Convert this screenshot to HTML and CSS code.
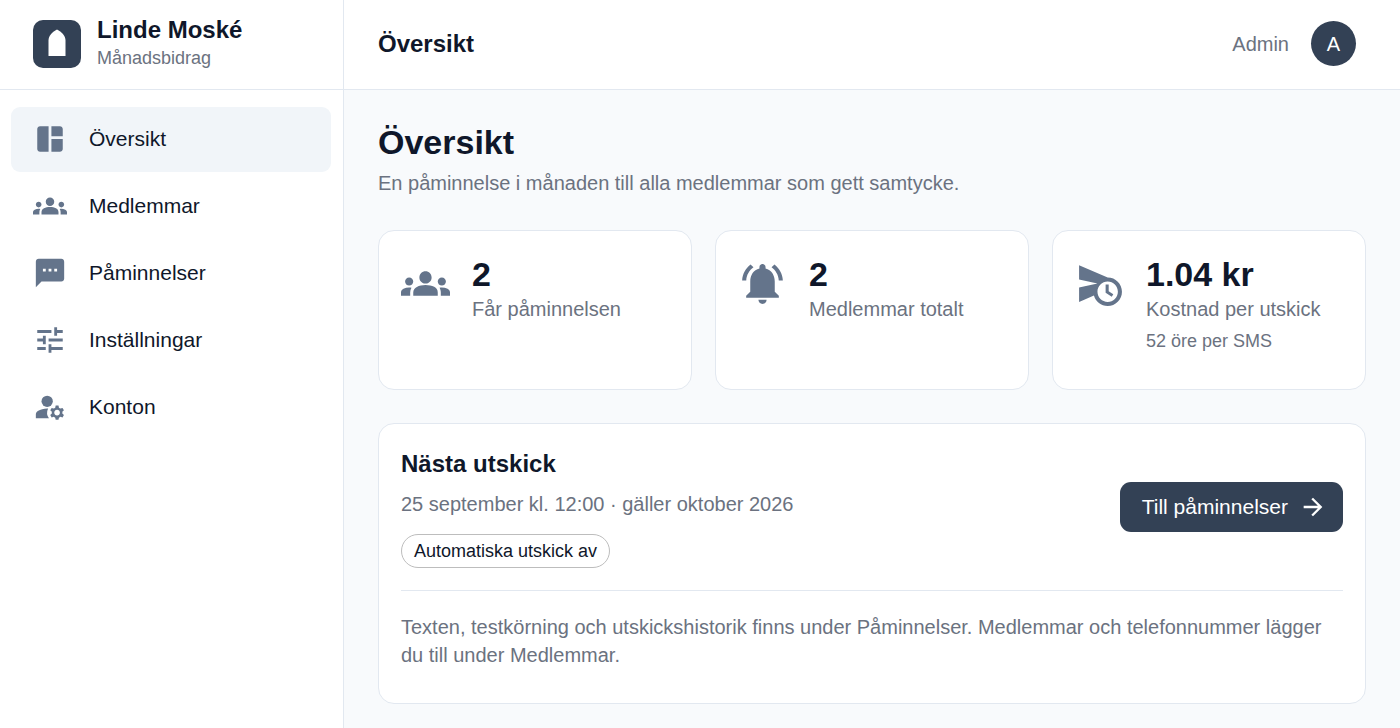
FILE: index.html
```html
<!DOCTYPE html>
<html lang="sv">
<head>
  <meta charset="UTF-8">
  <meta name="viewport" content="width=device-width, initial-scale=1">
  <title>Översikt – Linde Moské</title>
  <link rel="stylesheet" href="styles.css">
</head>
<body>
  <aside class="sidebar">
    <div class="brand">
      <svg class="brand-logo" viewBox="0 0 48 48" aria-hidden="true">
        <rect width="48" height="48" rx="10" fill="#334155"/>
        <path d="M15.500 36V20.500C15.500 15.500 19.500 12 24 9.500C28.500 12 32.500 15.500 32.500 20.500V36Z" fill="#fff"/>
      </svg>
      <div>
        <div class="brand-name">Linde Moské</div>
        <div class="brand-sub">Månadsbidrag</div>
      </div>
    </div>

    <nav class="nav">
      <a class="nav-item active" href="#oversikt">
        <svg class="icon" viewBox="0 0 24 24"><path d="M11 21H5c-1.100 0-2-.9-2-2V5c0-1.100.9-2 2-2h6zm2 0h6c1.100 0 2-.9 2-2v-7h-8zm8-11V5c0-1.100-.9-2-2-2h-6v7z"/></svg>
        Översikt
      </a>
      <a class="nav-item" href="#medlemmar">
        <svg class="icon" viewBox="0 0 24 24"><use href="#groups"/></svg>
        Medlemmar
      </a>
      <a class="nav-item" href="#paminnelser">
        <svg class="icon" viewBox="0 0 24 24"><path d="M20 2H4c-1.100 0-1.990.9-1.990 2L2 22l4-4h14c1.100 0 2-.9 2-2V4c0-1.100-.9-2-2-2M9 11H7V9h2zm4 0h-2V9h2zm4 0h-2V9h2z"/></svg>
        Påminnelser
      </a>
      <a class="nav-item" href="#installningar">
        <svg class="icon" viewBox="0 0 24 24"><path d="M3 17v2h6v-2zM3 5v2h10V5zm10 16v-2h8v-2h-8v-2h-2v6zM7 9v2H3v2h4v2h2V9zm14 4v-2H11v2zm-6-4h2V7h4V5h-4V3h-2z"/></svg>
        Inställningar
      </a>
      <a class="nav-item" href="#konton">
        <svg class="icon" viewBox="0 0 24 24"><circle cx="10" cy="8" r="4"/><path d="M10.670 13.020c-.22-.01-.44-.02-.67-.02-2.420 0-4.680.67-6.610 1.820-.88.52-1.390 1.500-1.390 2.530V20h9.260a6.960 6.960 0 0 1-.59-6.980M20.750 16c0-.22-.03-.42-.06-.63l1.140-1.010-1-1.730-1.450.49c-.32-.27-.68-.48-1.080-.63L18 11h-2l-.3 1.490c-.4.15-.76.36-1.080.63l-1.450-.49-1 1.730 1.140 1.010c-.03.21-.06.41-.06.63s.03.42.06.63l-1.140 1.010 1 1.730 1.450-.49c.32.27.68.48 1.080.63L16 21h2l.3-1.490c.4-.15.76-.36 1.080-.63l1.450.49 1-1.730-1.140-1.010c.03-.21.06-.41.06-.63M17 18c-1.100 0-2-.9-2-2s.9-2 2-2 2 .9 2 2-.9 2-2 2"/></svg>
        Konton
      </a>
    </nav>
  </aside>

  <div class="page">
    <header class="topbar">
      <div class="topbar-title">Översikt</div>
      <div class="user">
        <span>Admin</span>
        <span class="avatar">A</span>
      </div>
    </header>

    <main class="content">
      <h1>Översikt</h1>
      <p class="lead">En påminnelse i månaden till alla medlemmar som gett samtycke.</p>

      <section class="stats">
        <div class="card stat">
          <svg class="icon" viewBox="0 0 24 24">
            <path id="groups" d="M12 12.750c1.630 0 3.070.39 4.240.9 1.080.48 1.760 1.560 1.760 2.730V18H6v-1.610c0-1.180.68-2.260 1.760-2.730 1.170-.52 2.610-.91 4.240-.91M4 13c1.100 0 2-.9 2-2s-.9-2-2-2-2 .9-2 2 .9 2 2 2m1.130 1.100c-.37-.06-.74-.1-1.130-.1-.99 0-1.930.21-2.780.58C.48 14.900 0 15.620 0 16.430V18h4.500v-1.610c0-.83.23-1.610.63-2.290M20 13c1.100 0 2-.9 2-2s-.9-2-2-2-2 .9-2 2 .9 2 2 2m4 3.430c0-.81-.48-1.530-1.220-1.850-.85-.37-1.790-.58-2.780-.58-.39 0-.76.04-1.130.1.4.68.63 1.460.63 2.290V18H24zM12 6c1.660 0 3 1.340 3 3s-1.340 3-3 3-3-1.340-3-3 1.340-3 3-3"/>
          </svg>
          <div>
            <div class="stat-value">2</div>
            <div class="stat-label">Får påminnelsen</div>
          </div>
        </div>
        <div class="card stat">
          <svg class="icon" viewBox="0 0 24 24"><path d="M7.580 4.080 6.150 2.650C3.750 4.480 2.170 7.300 2.030 10.500h2c.15-2.650 1.510-4.970 3.550-6.420m12.390 6.420h2c-.15-3.200-1.730-6.020-4.120-7.850l-1.420 1.430c2.020 1.450 3.390 3.770 3.540 6.420M18 11c0-3.070-1.640-5.640-4.500-6.320V4c0-.83-.67-1.500-1.500-1.500s-1.500.67-1.500 1.500v.68C7.630 5.360 6 7.920 6 11v5l-2 2v1h16v-1l-2-2zm-6 11c.14 0 .27-.01.4-.04.65-.14 1.180-.58 1.440-1.180.1-.24.15-.5.15-.78h-4c.01 1.100.9 2 2.010 2"/></svg>
          <div>
            <div class="stat-value">2</div>
            <div class="stat-label">Medlemmar totalt</div>
          </div>
        </div>
        <div class="card stat">
          <svg class="icon" viewBox="0 0 24 24"><path d="M16.500 12.500H15v4l3 2 .75-1.230-2.250-1.520zM16 9 2 3v7l9 2-9 2v7l7.270-3.110C10.090 20.830 12.790 23 16 23c3.860 0 7-3.140 7-7s-3.140-7-7-7m0 12c-2.750 0-4.980-2.220-5-4.970v-.07c.02-2.740 2.250-4.970 5-4.970 2.760 0 5 2.240 5 5S18.760 21 16 21"/></svg>
          <div>
            <div class="stat-value">1.04 kr</div>
            <div class="stat-label">Kostnad per utskick</div>
            <div class="stat-note">52 öre per SMS</div>
          </div>
        </div>
      </section>

      <section class="card next">
        <div class="next-top">
          <div>
            <h2>Nästa utskick</h2>
            <p class="next-date">25 september kl. 12:00 · gäller oktober 2026</p>
            <span class="chip">Automatiska utskick av</span>
          </div>
          <button class="btn" type="button">
            Till påminnelser
            <svg viewBox="0 0 24 24"><path d="m12 4-1.410 1.410L16.170 11H4v2h12.170l-5.580 5.590L12 20l8-8z"/></svg>
          </button>
        </div>
        <p class="next-help">Texten, testkörning och utskickshistorik finns under Påminnelser. Medlemmar och telefonnummer lägger du till under Medlemmar.</p>
      </section>
    </main>
  </div>
</body>
</html>
```
FILE: styles.css
```css
* {
  box-sizing: border-box;
}

body {
  margin: 0;
  min-height: 100vh;
  display: flex;
  font-family: Arial, "Liberation Sans", sans-serif;
  font-size: 20px;
  line-height: 28px;
  color: #0f172a;
  background: #f8fafc;
}

h1, h2, p {
  margin: 0;
}

svg {
  display: block;
  flex-shrink: 0;
  fill: currentColor;
}

/* sidebar */
.sidebar {
  width: 344px;
  flex-shrink: 0;
  background: #fff;
  border-right: 1px solid #e2e8f0;
}

.brand {
  height: 90px;
  display: flex;
  align-items: center;
  gap: 16px;
  padding: 0 33px 2px;
  border-bottom: 1px solid #e2e8f0;
}

.brand-logo {
  width: 48px;
  height: 48px;
}

.brand-name,
.topbar-title {
  font-size: 24px;
  font-weight: bold;
}

.brand-sub {
  font-size: 18px;
  color: #6b7280;
}

.nav {
  display: flex;
  flex-direction: column;
  gap: 2px;
  padding: 17px 12px 17px 11px;
}

.nav-item {
  display: flex;
  align-items: center;
  gap: 22px;
  height: 65px;
  padding: 0 22px 2px;
  border-radius: 9px;
  font-size: 21px;
  color: #0f172a;
  text-decoration: none;
}

.nav-item.active {
  background: #f1f5f9;
}

.icon {
  width: 34px;
  height: 34px;
  color: #64748b;
}

/* page */
.page {
  flex: 1;
  min-width: 0;
}

.topbar {
  height: 90px;
  display: flex;
  align-items: center;
  justify-content: space-between;
  padding: 0 44px 2px 34px;
  background: #fff;
  border-bottom: 1px solid #e2e8f0;
}

.user {
  display: flex;
  align-items: center;
  gap: 22px;
  color: #6b7280;
}

.avatar {
  display: flex;
  align-items: center;
  justify-content: center;
  width: 45px;
  height: 45px;
  border-radius: 50%;
  color: #fff;
  background: #334155;
}

.content {
  padding: 33px 34px;
}

h1 {
  font-size: 34px;
  line-height: 38px;
}

.lead {
  margin: 8px 0 33px;
  color: #6b7280;
}

.card {
  padding: 22px 22px 34px;
  background: #fff;
  border: 1px solid #e2e8f0;
  border-radius: 16px;
}

.stats {
  display: grid;
  grid-template-columns: repeat(3, 1fr);
  gap: 23px;
  margin-bottom: 33px;
}

.stat {
  display: flex;
  align-items: flex-start;
  gap: 22px;
}

.stat .icon {
  width: 49px;
  height: 49px;
  margin-top: 6px;
}

.stat-value {
  font-size: 34px;
  line-height: 42px;
  font-weight: bold;
}

.stat-label {
  color: #6b7280;
}

.stat-note {
  margin-top: 4px;
  font-size: 18px;
  color: #6b7280;
}

.next-top {
  display: flex;
  align-items: center;
  justify-content: space-between;
  gap: 22px;
  padding-bottom: 22px;
  border-bottom: 1px solid #e2e8f0;
}

h2 {
  font-size: 24px;
  line-height: 36px;
}

.next-date {
  margin: 8px 0 16px;
  color: #6b7280;
}

.chip {
  display: flex;
  align-items: center;
  width: fit-content;
  height: 34px;
  padding: 0 12px;
  border: 1px solid #bdbdbd;
  border-radius: 17px;
  font-size: 18px;
}

.btn {
  display: flex;
  align-items: center;
  gap: 11px;
  height: 50px;
  padding: 0 16px 0 22px;
  border: 0;
  border-radius: 11px;
  font: inherit;
  font-size: 21px;
  color: #fff;
  background: #334155;
  cursor: pointer;
}

.btn svg {
  width: 28px;
  height: 28px;
}

.next-help {
  padding-top: 22px;
  color: #6b7280;
}
```
